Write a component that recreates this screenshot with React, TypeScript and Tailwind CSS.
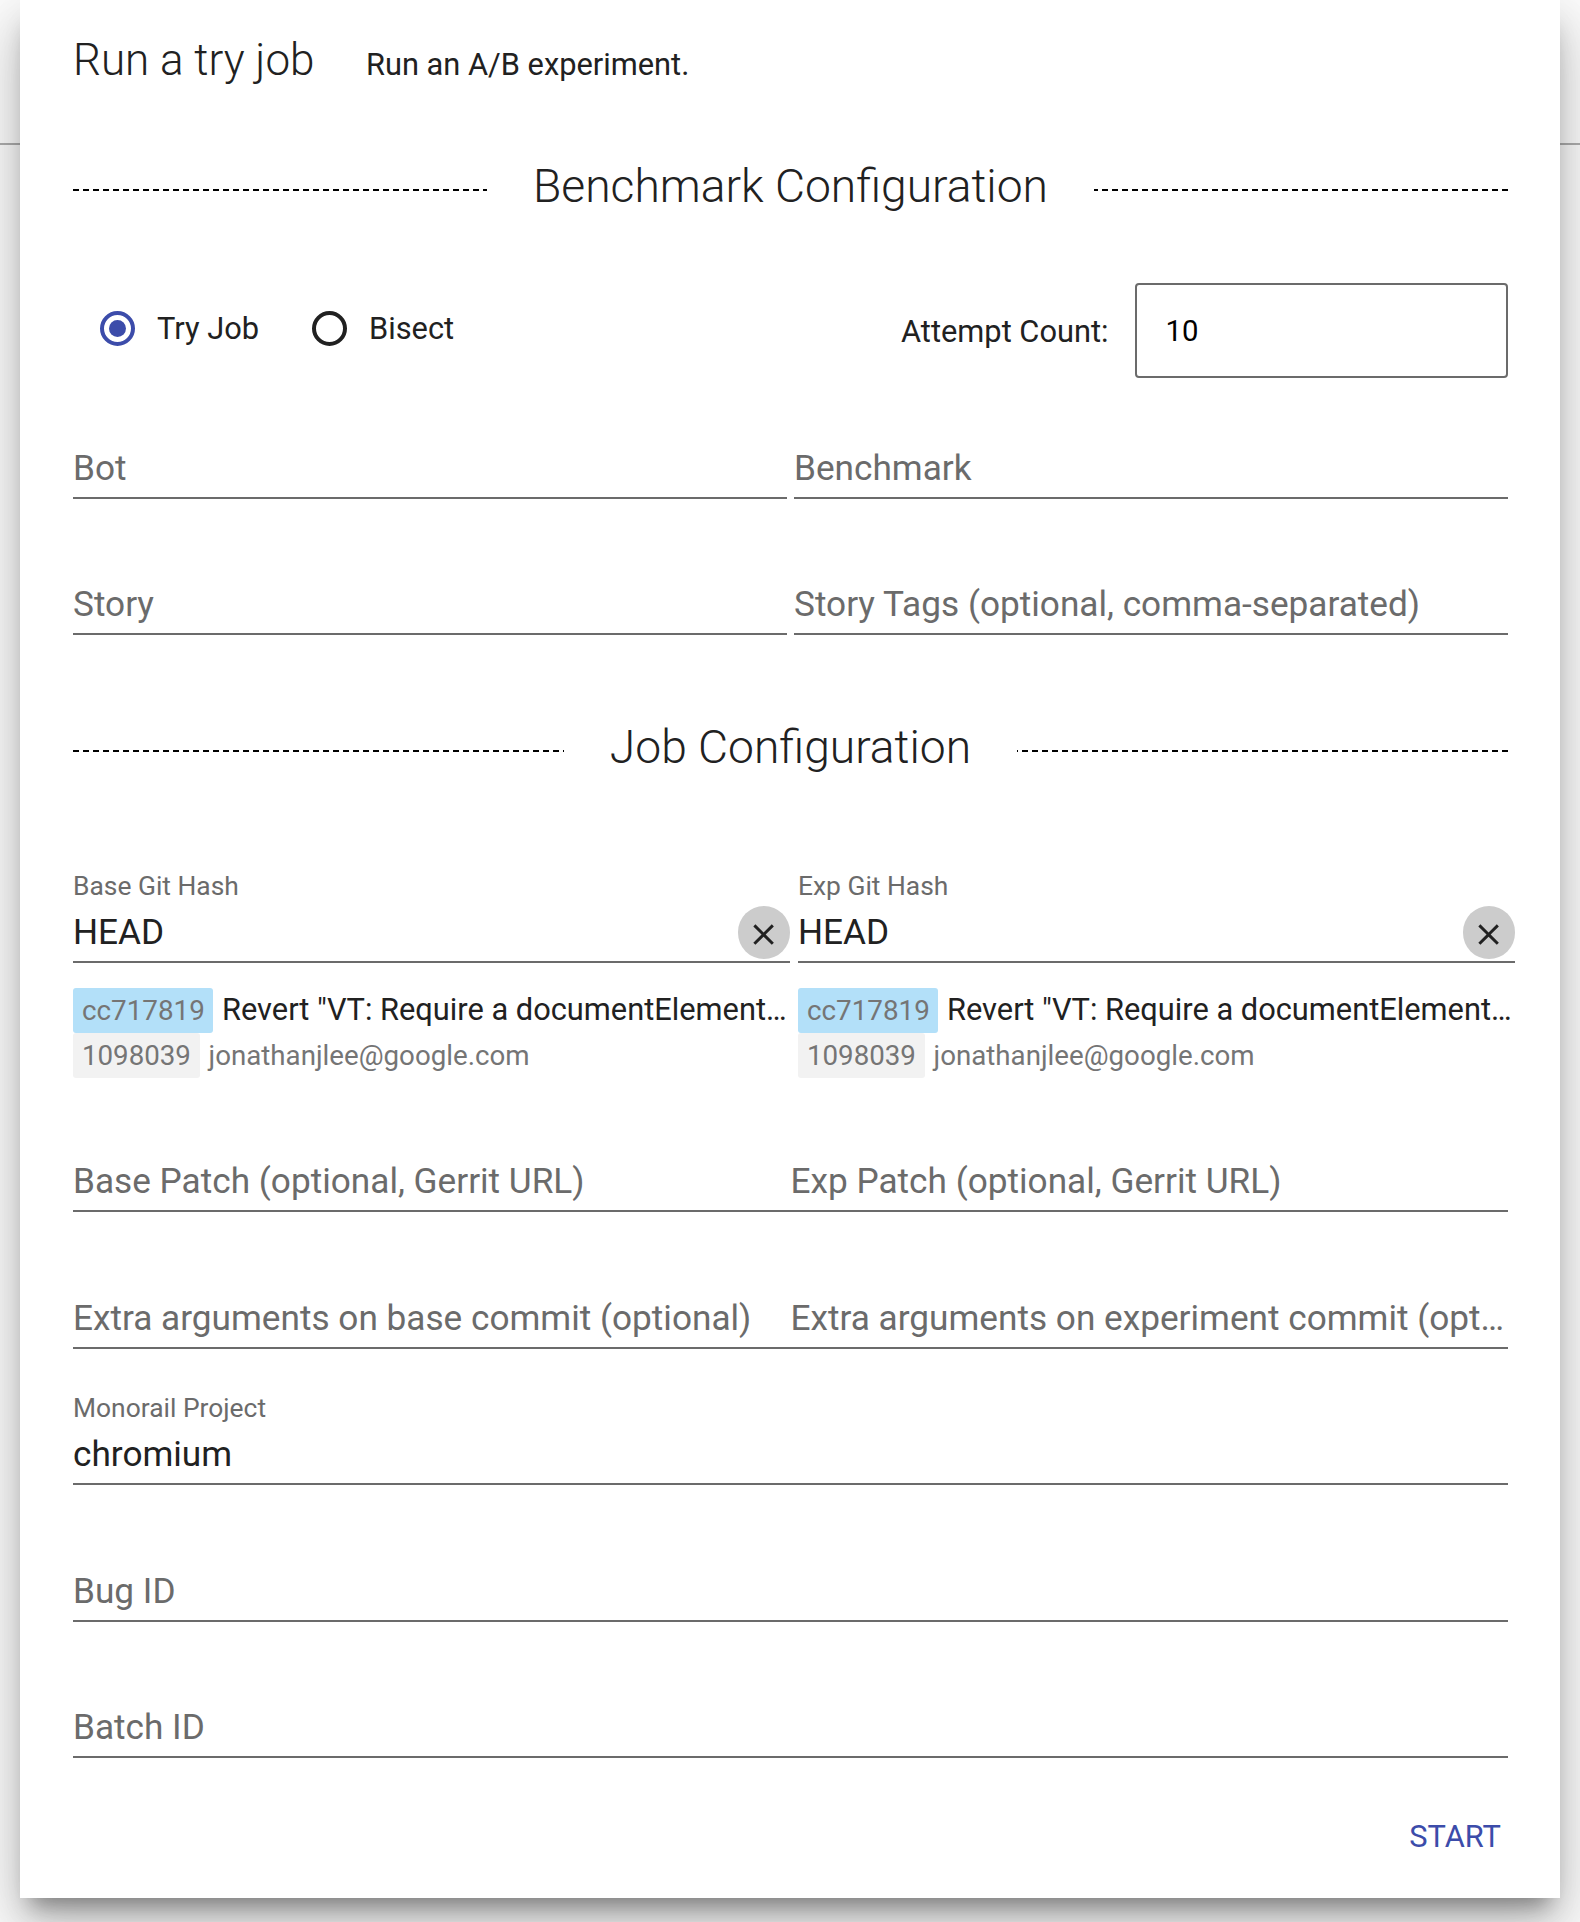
import React from "react";

function SectionHeading({ children }: { children: React.ReactNode }) {
  return (
    <div className="flex items-center gap-[46px]">
      <div className="mt-[8px] h-[2px] flex-1 bg-[repeating-linear-gradient(to_right,#000_0,#000_6px,transparent_6px,transparent_10px)]" />
      <h2 className="text-[46.2px] leading-[56px] font-light whitespace-nowrap">{children}</h2>
      <div className="mt-[8px] h-[2px] flex-1 bg-[repeating-linear-gradient(to_left,#000_0,#000_6px,transparent_6px,transparent_10px)]" />
    </div>
  );
}

function Field({
  label,
  value,
  clearable,
}: {
  label: string;
  value?: string;
  clearable?: boolean;
}) {
  return (
    <div className="flex min-w-0 flex-1 flex-col">
      <div className="h-[44px] text-[26.4px] leading-[44px] text-[#6b6b6b]">{value ? label : ""}</div>
      <div className="flex h-[55px] border-b-2 border-[#6b6b6b]">
        {value ? (
          <div className="flex-1 truncate text-[35.2px] leading-[48px] text-[#212121]">{value}</div>
        ) : (
          <div className="flex-1 truncate text-[35.2px] leading-[48px] text-[#6b6b6b]">{label}</div>
        )}
        {clearable && (
          <button
            aria-label="Clear"
            className="-mt-[2px] flex h-[53px] w-[52.5px] items-center justify-center rounded-full bg-[#cccccc] pt-[4px]"
          >
            <svg viewBox="0 0 24 24" className="size-[35.2px] shrink-0 fill-[#212121]">
              <path d="M19 6.41L17.59 5 12 10.59 6.41 5 5 6.41 10.59 12 5 17.59 6.41 19 12 13.41 17.59 19 19 17.59 13.41 12z" />
            </svg>
          </button>
        )}
      </div>
    </div>
  );
}

function Radio({ label, checked }: { label: string; checked?: boolean }) {
  return (
    <label className="flex items-center gap-[22px]">
      {checked ? (
        <span className="flex size-[35px] items-center justify-center rounded-full border-4 border-[#3c4caa]">
          <span className="size-[17px] rounded-full bg-[#3c4caa]" />
        </span>
      ) : (
        <span className="size-[35px] rounded-full border-4 border-[#212121]" />
      )}
      <span className="text-[30.8px] leading-[36px]">{label}</span>
    </label>
  );
}

function CommitInfo() {
  return (
    <div className="w-[717px]">
      <div className="flex h-[45px] items-center gap-[9px]">
        <span className="w-[140px] rounded-[3px] bg-[#b3e0f9] pl-[9px] text-[27.8px] leading-[45px] text-[#757575]">
          cc717819
        </span>
        <span className="pb-[2px] text-[30.8px] leading-[42px] whitespace-nowrap">
          Revert "VT: Require a documentElement…
        </span>
      </div>
      <div className="flex h-[45px] items-center gap-[8.6px] text-[27.7px] leading-[45px] text-[#757575]">
        <span className="rounded-[3px] bg-[#f2f2f2] px-[9px]">1098039</span>
        <span>jonathanjlee@google.com</span>
      </div>
    </div>
  );
}

export default function App() {
  return (
    <div className="relative h-[1922px] w-[1580px] overflow-hidden bg-white font-['Roboto',sans-serif] text-[#212121]">
      <div className="absolute top-[143px] left-0 h-[2px] w-full bg-[#b0b0b0]" />
      <div className="relative mx-[20px] flex h-[1898px] flex-col bg-white pt-[34px] pr-[52px] pl-[53px] shadow-[0_35px_53px_4px_rgba(0,0,0,0.14),0_13px_66px_11px_rgba(0,0,0,0.12),0_18px_22px_-11px_rgba(0,0,0,0.4)]">
        <div className="flex h-[52px] items-baseline gap-[51.5px]">
          <h1 className="text-[44px] leading-[52px] font-light">Run a try job</h1>
          <span className="text-[30.8px]">Run an A/B experiment.</span>
        </div>

        <div className="mt-[72px]">
          <SectionHeading>Benchmark Configuration</SectionHeading>
        </div>

        <div className="mt-[69px] flex h-[95px] justify-between">
          <div className="mt-[28px] ml-[27px] flex h-[35px] items-center gap-[53px]">
            <Radio label="Try Job" checked />
            <Radio label="Bisect" />
          </div>
          <div className="flex items-center gap-[26.5px]">
            <span className="pt-[3px] text-[30.8px]">Attempt Count:</span>
            <div className="flex h-[95px] w-[373px] items-center rounded-[4px] border-2 border-[#6b6b6b] pt-[2px] pl-[28.5px] text-[29.3px] text-black">
              10
            </div>
          </div>
        </div>

        <div className="mt-[22px] flex gap-[7px]">
          <Field label="Bot" />
          <Field label="Benchmark" />
        </div>
        <div className="mt-[37px] flex gap-[7px]">
          <Field label="Story" />
          <Field label="Story Tags (optional, comma-separated)" />
        </div>

        <div className="mt-[84px]">
          <SectionHeading>Job Configuration</SectionHeading>
        </div>

        <div className="mt-[89px] -mr-[7px] flex gap-[8px]">
          <Field label="Base Git Hash" value="HEAD" clearable />
          <Field label="Exp Git Hash" value="HEAD" clearable />
        </div>
        <div className="mt-[25px] -mr-[7px] flex gap-[8px]">
          <CommitInfo />
          <CommitInfo />
        </div>

        <div className="mt-[35px] flex">
          <Field label="Base Patch (optional, Gerrit URL)" />
          <Field label="Exp Patch (optional, Gerrit URL)" />
        </div>
        <div className="mt-[38px] flex">
          <Field label="Extra arguments on base commit (optional)" />
          <Field label="Extra arguments on experiment commit (opt…" />
        </div>
        <div className="mt-[37px] flex">
          <Field label="Monorail Project" value="chromium" />
        </div>
        <div className="mt-[38px] flex">
          <Field label="Bug ID" />
        </div>
        <div className="mt-[37px] flex">
          <Field label="Batch ID" />
        </div>

        <div className="mt-[59px] flex justify-end pr-[7px]">
          <button className="text-[30.8px] leading-[40px] text-[#3c4caa]">START</button>
        </div>
      </div>
    </div>
  );
}
